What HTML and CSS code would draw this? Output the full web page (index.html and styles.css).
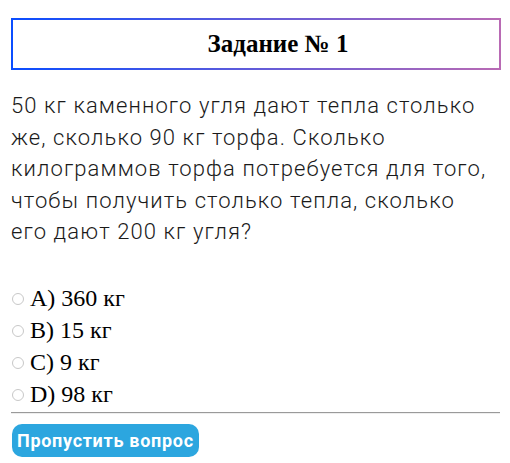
FILE: index.html
```html
<!DOCTYPE html>
<html lang="ru">
<head>
<meta charset="utf-8">
<link rel="stylesheet" href="styles.css">
</head>
<body>
<div class="quiz">
  <div class="title-box"><h2 class="title">Задание № 1</h2></div>
  <p class="question">50 кг каменного угля дают тепла столько же, сколько 90 кг торфа. Сколько килограммов торфа потребуется для того, чтобы получить столько тепла, сколько его дают 200 кг угля?</p>
  <div class="options">
    <label class="option"><input type="radio" name="a" class="radio">A) 360 кг</label>
    <label class="option"><input type="radio" name="a" class="radio">B) 15 кг</label>
    <label class="option"><input type="radio" name="a" class="radio">C) 9 кг</label>
    <label class="option"><input type="radio" name="a" class="radio">D) 98 кг</label>
  </div>
  <hr class="divider">
  <button class="skip">Пропустить вопрос</button>
</div>
</body>
</html>
```
FILE: styles.css
```css
html, body { margin: 0; padding: 0; background: #fff; }
body { padding: 18px 9px 0 11px; }
.quiz { width: 490px; }
.title-box {
  height: 52px;
  box-sizing: border-box;
  border: 2px solid transparent;
  background: linear-gradient(#fff, #fff) padding-box, linear-gradient(90deg, #0a4dff, #b96ab4) border-box;
  display: flex;
  align-items: center;
  justify-content: center;
  padding-left: 44px;
}
.title {
  margin: 0;
  font-family: "Liberation Serif", serif;
  font-weight: bold;
  font-size: 25px;
  color: #000;
}
.question {
  margin: 20px 0 0 0;
  max-width: 480px;
  font-family: Roboto, sans-serif;
  font-weight: 300;
  font-size: 22px;
  letter-spacing: 1.1px;
  line-height: 31.5px;
  color: #1a1a1a;
}
.options {
  margin-top: 34px;
  display: flex;
  flex-direction: column;
}
.option {
  font-family: "Liberation Serif", serif;
  font-size: 24px;
  line-height: 32px;
  color: #000;
  display: flex;
  align-items: center;
}
.radio {
  appearance: none;
  -webkit-appearance: none;
  width: 12px;
  height: 12px;
  margin: 3px 6px 0 1px;
  border: 1px solid #c8c8c8;
  border-radius: 50%;
  box-sizing: border-box;
}
.divider {
  margin: 2px 0 0 0;
  border: 0;
  border-top: 1px solid #9a9a9a;
  border-bottom: 1px solid #eee;
  width: 489px;
}
.skip {
  margin-top: 10px;
  margin-left: 1px;
  background: #2ca6df;
  color: #fff;
  border: 0;
  border-radius: 10px;
  height: 33px;
  padding: 0 5px;
  font-family: Roboto, sans-serif;
  font-weight: bold;
  font-size: 18px;
  letter-spacing: 0.7px;
}
```
